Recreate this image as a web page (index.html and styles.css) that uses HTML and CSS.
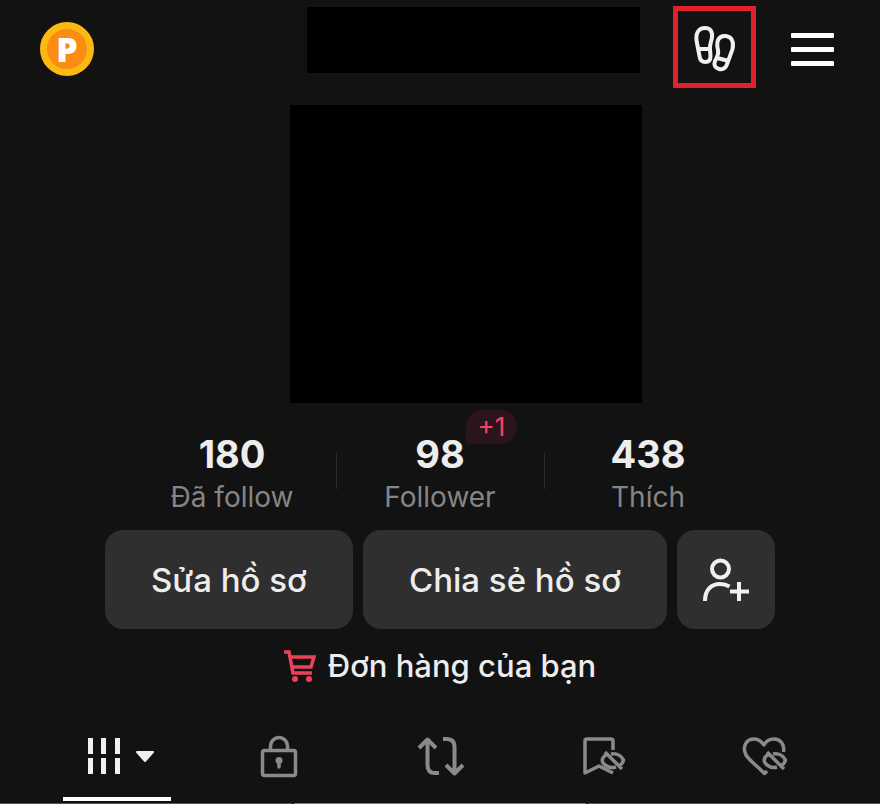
FILE: index.html
```html
<!DOCTYPE html>
<html lang="vi">
<head>
  <meta charset="UTF-8">
  <meta name="viewport" content="width=device-width, initial-scale=1">
  <title>Hồ sơ</title>
  <link rel="stylesheet" href="styles.css">
</head>
<body>

  <header class="topbar">
    <button class="coin"><span>P</span></button>
    <div class="name"></div>
    <button class="visits" aria-label="Lượt xem hồ sơ">
      <svg width="44" height="48" viewBox="0 0 44 48" fill="none" stroke="#f0f0f0" stroke-width="4">
        <path d="M12 5C17 5 19.500 8 19 14C18.500 19 16.500 21 17 26L17.500 33C17.500 37 15.500 39 12.500 39C9 39 7 37.500 6.500 33L4 20C2 11 5 5 12 5Z"/>
        <path d="M5 26H17"/>
        <path d="M33 13C39 14 41 19 39.500 26C38 31 36 35 34.500 40C33 45 30 47 26 46C22 45 20.500 42 22 38C24 34 26 32 25 27C23 19 25 12 33 13Z"/>
        <path d="M24 35L36 38"/>
      </svg>
    </button>
    <button class="menu" aria-label="Menu">
      <svg width="43" height="33" viewBox="0 0 43 33" fill="#fff">
        <rect y="0" width="43" height="5" rx="1"/>
        <rect y="14" width="43" height="5" rx="1"/>
        <rect y="28" width="43" height="5" rx="1"/>
      </svg>
    </button>
  </header>

  <main>
    <div class="avatar"></div>

    <div class="stats">
      <div class="stat"><strong>180</strong><span>Đã follow</span></div>
      <div class="stat"><strong>98</strong><span>Follower</span><em class="badge">+1</em></div>
      <div class="stat"><strong>438</strong><span>Thích</span></div>
    </div>

    <div class="actions">
      <button class="btn btn-edit">Sửa hồ sơ</button>
      <button class="btn btn-share">Chia sẻ hồ sơ</button>
      <button class="btn btn-add" aria-label="Thêm bạn">
        <svg width="46" height="44" viewBox="0 0 46 44" fill="none" stroke="#f0f0f0" stroke-width="4">
          <circle cx="17.500" cy="11" r="8.500"/>
          <path d="M2 43C2 31 9 26 17 26C21 26 24 27 26.500 28.500M36 24V43M27 33.500H46"/>
        </svg>
      </button>
    </div>

    <a class="orders" href="#">
      <svg width="32" height="32" viewBox="0 0 32 32" fill="none" stroke="#ea4359" stroke-width="3.500">
        <path d="M0 2H5L9 23H28M6 7H30L27 17H8"/>
        <circle cx="11" cy="29" r="3" fill="#ea4359" stroke="none"/>
        <circle cx="25" cy="29" r="3" fill="#ea4359" stroke="none"/>
      </svg>
      <span>Đơn hàng của bạn</span>
    </a>
  </main>

  <nav class="tabs">
    <button class="tab active" aria-label="Video">
      <svg width="68" height="44" viewBox="0 0 68 44" fill="#f0f0f0">
        <path d="M5 4H10V20H5zM18 4H23V20H18zM32 4H37V20H32zM5 24H10V40H5zM18 24H23V40H18zM32 24H37V40H32z"/>
        <path d="M54 18H70L62 27Z" stroke="#f0f0f0" stroke-width="2" stroke-linejoin="round"/>
      </svg>
    </button>
    <button class="tab" aria-label="Riêng tư">
      <svg width="44" height="44" viewBox="0 0 44 44" fill="none" stroke="#8a8a8a" stroke-width="3.500">
        <rect x="5.500" y="16.500" width="33" height="25" rx="2"/>
        <path d="M13.500 16V12a8.500 8.500 0 0 1 17 0V16"/>
        <circle cx="22" cy="26.500" r="3.500" fill="#8a8a8a" stroke="none"/>
        <path d="M22 27V33" stroke-linecap="round"/>
      </svg>
    </button>
    <button class="tab" aria-label="Đăng lại">
      <svg width="44" height="44" viewBox="0 0 44 44" fill="none" stroke="#8a8a8a" stroke-width="4" stroke-linejoin="round">
        <path d="M0 14L8.500 5.500L17 14M8.500 6V31Q8.500 39 16 39H20M24 5H28Q35.500 5 35.500 13V38M27 31L35.500 39.500L44 31"/>
      </svg>
    </button>
    <button class="tab" aria-label="Đã lưu">
      <svg width="46" height="44" viewBox="0 0 46 44" fill="none" stroke="#8a8a8a" stroke-width="3.500" stroke-linejoin="round">
        <path d="M33 16V7Q33 5 31 5H7Q5 5 5 7V39L19 32L33 39"/>
        <path d="M28 20C21 23 21 28 25 31C29 34 33 34 36 33M31 20C38 19 42 23 43.500 26C43 28 42 30 40 31M25 18L42 35"/>
      </svg>
    </button>
    <button class="tab" aria-label="Đã thích">
      <svg width="46" height="44" viewBox="0 0 46 44" fill="none" stroke="#8a8a8a" stroke-width="3.500" stroke-linejoin="round">
        <path d="M41.500 18C43 10 38 5 32 5C27 5 24 7 22 11C19 7 16 5 12 5C4 5 0 13 4 21C7 26 16 33 22.500 39.500L25 37"/>
        <path d="M27 20C21 23 21 28 25 31C29 34 32 34 35 33M31 20C38 19 42 23 43.500 26C43 28 42 30 40 31M25 18L42 35"/>
      </svg>
    </button>
  </nav>
  <div class="videos"><i></i><i></i><i></i></div>

</body>
</html>
```
FILE: styles.css
```css
* {
  box-sizing: border-box;
}
body {
  margin: 0;
  background: #121212;
  color: #ededed;
  font-family: Inter, "Noto Sans", sans-serif;
}
button {
  padding: 0;
  border: 0;
  background: none;
  color: inherit;
  font: inherit;
  cursor: pointer;
}
svg {
  display: block;
  overflow: visible;
}

.topbar {
  display: flex;
  align-items: center;
  padding: 6px 46px 0 40px;
}
.coin {
  width: 54px;
  height: 54px;
  margin-top: 4px;
  border: 7px solid #fdb913;
  border-radius: 50%;
  background: #fb8c12;
  color: #fff;
  font-family: "Open Sans", sans-serif;
  font-size: 34px;
  font-weight: 800;
  line-height: 40px;
}
.name {
  flex: 1;
  height: 66px;
  margin: 0 33px 14px 213px;
  background: #000;
}
.visits {
  display: flex;
  align-items: center;
  justify-content: center;
  width: 83px;
  height: 82px;
  margin-right: 35px;
  border: 5px solid #e0202b;
}
.menu {
  margin-top: 5px;
}

.avatar {
  width: 40%;
  height: 298px;
  margin: 17px 27% 0 auto;
  background: #000;
}

.stats {
  display: flex;
  justify-content: center;
  margin-top: 31px;
}
.stat {
  position: relative;
  display: flex;
  flex-direction: column;
  align-items: center;
  width: 208px;
}
.stat + .stat::before {
  content: "";
  position: absolute;
  left: 0;
  top: 19px;
  width: 1px;
  height: 36px;
  background: #2c2c2c;
}
.stat strong {
  font-size: 38px;
  line-height: 40px;
}
.stat span {
  margin-top: 5px;
  color: #858585;
  font-size: 28px;
  line-height: 36px;
}
.badge {
  position: absolute;
  left: 130px;
  top: -24px;
  width: 51px;
  border-radius: 17px 17px 17px 4px;
  background: #2c141b;
  color: #fb3f63;
  font-size: 26px;
  font-style: normal;
  line-height: 34px;
  text-align: center;
}

.actions {
  display: flex;
  gap: 10px;
  margin: 15px 105px 0;
}
.btn {
  display: flex;
  align-items: center;
  justify-content: center;
  height: 99px;
  border-radius: 18px;
  background: #2f2f2f;
  font-size: 33px;
  font-weight: 500;
}
.btn-edit {
  flex: 248;
}
.btn-share {
  flex: 304;
}
.btn-add {
  flex: 98;
}

.orders {
  display: flex;
  align-items: center;
  justify-content: center;
  gap: 12px;
  margin-top: 17px;
  color: inherit;
  font-size: 31px;
  font-weight: 500;
  line-height: 40px;
  text-decoration: none;
}

.tabs {
  display: flex;
  margin: 48px 34px 0 36px;
}
.tab {
  display: flex;
  flex: 1;
  justify-content: center;
  height: 69px;
}
.active::after {
  content: "";
  position: absolute;
  width: 108px;
  height: 4px;
  margin-top: 63px;
  background: #fff;
}

/* top edge of the video grid */
.videos {
  display: flex;
  gap: 2px;
}
.videos i {
  flex: 1;
  height: 1px;
  background: #555;
}
.videos i:nth-child(2) {
  background: #a07068;
}
```
